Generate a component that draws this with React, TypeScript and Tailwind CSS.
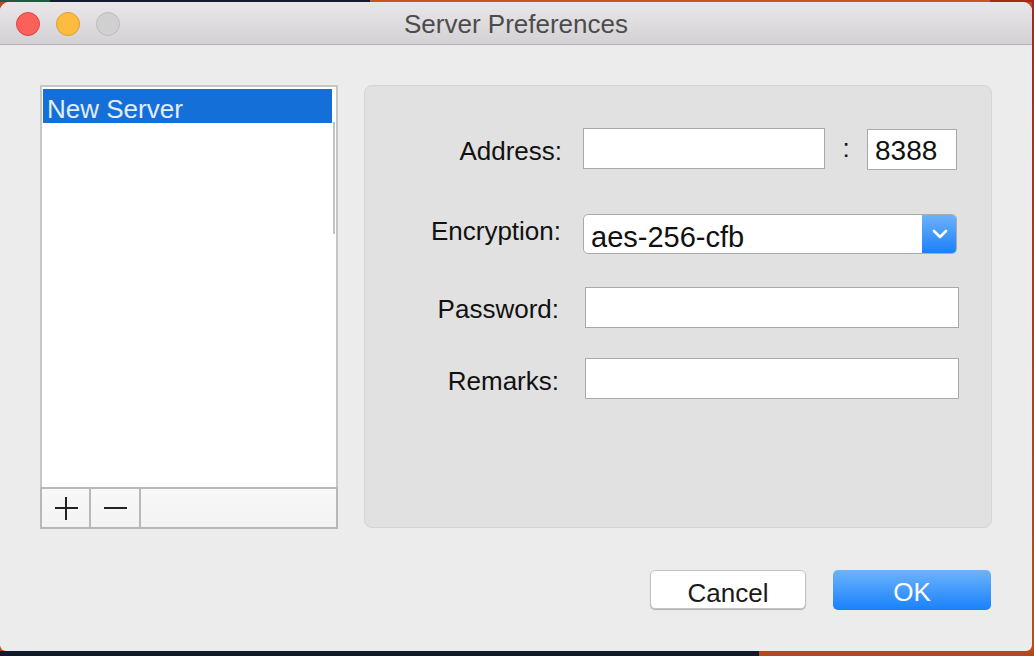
import React, { useState } from 'react';

const font = { fontFamily: '"Liberation Sans", Arial, sans-serif' };

const TextField = ({ value, width, onChange }: { value: string; width: string; onChange: (v: string) => void }) => (
  <input
    type="text"
    value={value}
    onChange={(e) => onChange(e.target.value)}
    className={`${width} h-[41px] bg-white border border-[#a9a9a9] px-[7px] pt-[3px] text-[28px] text-[#111] outline-none`}
  />
);

const App = () => {
  const [address, setAddress] = useState<string>('');
  const [port, setPort] = useState<string>('8388');
  const [password, setPassword] = useState<string>('');
  const [remarks, setRemarks] = useState<string>('');

  return (
    <div className="w-[1034px] h-[656px] flex flex-col bg-[#c24a1d] overflow-hidden" style={font}>
      {/* desktop strip above the window */}
      <div className="h-[2px] shrink-0 bg-[linear-gradient(90deg,#1f5b3c_0px,#1f5b3c_50px,#151c2d_50px,#151c2d_370px,#c9561d_370px,#c9561d_990px,#a8261a_990px)]" />

      <div className="flex">
        {/* Window */}
        <div className="w-[1032px] h-[649px] bg-[#ececec] rounded-t-[9px] rounded-b-[6px] overflow-hidden flex flex-col">
          {/* Title bar */}
          <div className="relative h-[43px] shrink-0 bg-[linear-gradient(180deg,#e9e7e9,#d3d1d3)] border-b border-[#b4b4b4] flex items-center">
            <div className="flex gap-[16px] pl-[16px] pt-[2px]">
              <span className="w-[24px] h-[24px] rounded-full bg-[#fc605b] border border-[#de4640]" />
              <span className="w-[24px] h-[24px] rounded-full bg-[#fdbc40] border border-[#dd9e2c]" />
              <span className="w-[24px] h-[24px] rounded-full bg-[#d1d0d1] border border-[#bdbcbd]" />
            </div>
            <div className="absolute inset-0 flex items-center justify-center pt-[3px] text-[26px] text-[#4c4c4c] pointer-events-none">
              Server Preferences
            </div>
          </div>

          {/* Body */}
          <div className="flex-1 flex flex-col pt-[40px] pl-[40px] pr-[40px]">
            <div className="flex gap-[26px]">
              {/* Server list */}
              <div className="w-[298px] h-[444px] flex flex-col">
                <div className="flex-1 bg-white border-2 border-b-0 border-[#c6c6c6] pt-[2px] pl-[1px] flex">
                  <div className="flex-1">
                    <div className="h-[34px] bg-[#1470d8] text-[#e4ecf8] text-[26px] leading-[34px] pt-[3px] pl-[4px]">
                      New Server
                    </div>
                  </div>
                  <div className="w-[4px] flex flex-col">
                    <div className="h-[33px] bg-white" />
                    <div className="h-[112px] border-l-2 border-[#c4c4c4] ml-[1px]" />
                  </div>
                </div>
                <div className="h-[42px] flex border-2 border-[#b8b8b8] bg-[linear-gradient(180deg,#f8f8f8,#f3f3f3)]">
                  <button className="w-[49px] border-r-2 border-[#b8b8b8] flex items-center justify-center">
                    <svg width="24" height="24" viewBox="0 0 24 24">
                      <path d="M12 1v23M1 12h23" stroke="#222" strokeWidth="2" fill="none" />
                    </svg>
                  </button>
                  <button className="w-[50px] border-r-2 border-[#b8b8b8] flex items-center justify-center">
                    <svg width="24" height="24" viewBox="0 0 24 24">
                      <path d="M1 12h23" stroke="#222" strokeWidth="2" fill="none" />
                    </svg>
                  </button>
                  <div className="flex-1" />
                </div>
              </div>

              {/* Settings panel */}
              <div className="w-[628px] h-[443px] bg-[#e1e1e1] border border-[#d5d5d5] rounded-[8px] flex flex-col pt-[42px] text-[26px] text-[#111]">
                <div className="flex items-center">
                  <label className="w-[197px] h-[41px] leading-[41px] pt-[2px] text-right">Address:</label>
                  <div className="ml-[21px]">
                    <TextField value={address} width="w-[242px]" onChange={setAddress} />
                  </div>
                  <span className="w-[42px] h-[41px] leading-[38px] text-center">:</span>
                  <TextField value={port} width="w-[90px]" onChange={setPort} />
                </div>

                <div className="flex items-center mt-[44px]">
                  <label className="w-[196px] h-[40px] leading-[34px] text-right">Encryption:</label>
                  <div className="ml-[22px] w-[374px] h-[40px] flex rounded-[5px] border border-[#ababab] bg-white overflow-hidden">
                    <div className="flex-1 text-[29px] leading-[40px] pt-[2px] pl-[7px] text-[#111]">aes-256-cfb</div>
                    <div className="w-[35px] bg-[linear-gradient(180deg,#6fb2fb,#1a7ffb)] flex items-center justify-center -my-px -mr-px">
                      <svg width="16" height="10" viewBox="0 0 16 10">
                        <path d="M2 2l6 6 6-6" stroke="#fff" strokeWidth="2.6" fill="none" strokeLinecap="round" strokeLinejoin="round" />
                      </svg>
                    </div>
                  </div>
                </div>

                <div className="flex items-center mt-[33px]">
                  <label className="w-[194px] h-[41px] leading-[41px] pt-[1px] text-right">Password:</label>
                  <div className="ml-[26px]">
                    <TextField value={password} width="w-[374px]" onChange={setPassword} />
                  </div>
                </div>

                <div className="flex items-center mt-[29px]">
                  <label className="w-[194px] h-[41px] leading-[41px] pt-[2px] text-right">Remarks:</label>
                  <div className="ml-[26px]">
                    <TextField value={remarks} width="w-[374px]" onChange={setRemarks} />
                  </div>
                </div>
              </div>
            </div>

            {/* Dialog buttons */}
            <div className="flex justify-end gap-[27px] mt-[41px] pr-[1px]">
              <button className="w-[156px] h-[39px] bg-white border border-[#c4c4c4] rounded-[5px] shadow-[0_1px_1px_rgba(0,0,0,0.25)] pt-[3px] text-[26px] text-[#1a1a1a]">
                Cancel
              </button>
              <button className="w-[158px] h-[40px] bg-[linear-gradient(180deg,#6db4fb,#1981fb)] rounded-[5px] pt-[3px] text-[26px] text-white">
                OK
              </button>
            </div>
          </div>
        </div>
        <div className="flex-1 bg-[linear-gradient(180deg,#a8261a,#c24a1d)]" />
      </div>

      {/* desktop strip below the window */}
      <div className="flex-1 bg-[linear-gradient(90deg,#111a2b_0px,#111a2b_759px,#b4481c_759px)]" />
    </div>
  );
};

export default App;
